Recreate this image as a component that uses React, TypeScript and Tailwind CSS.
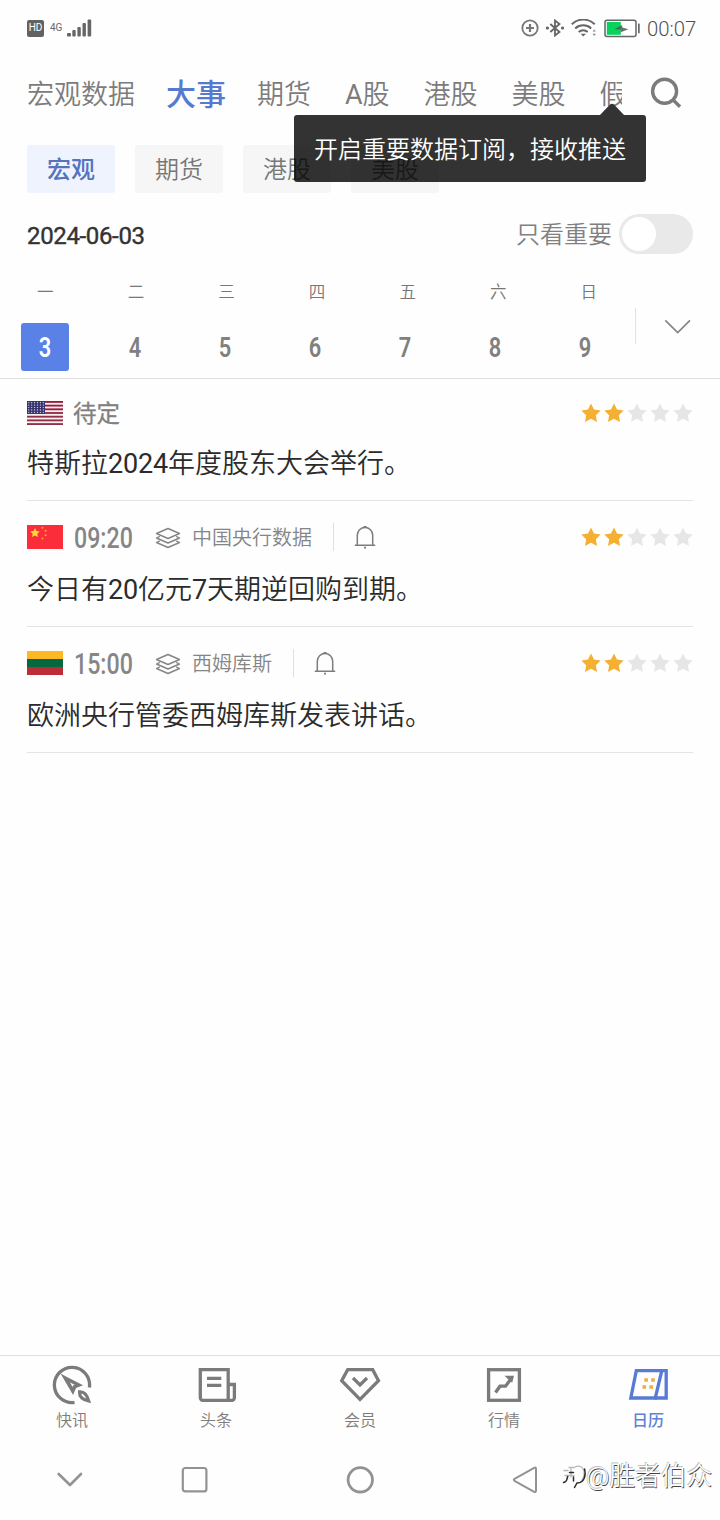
import { useState } from 'react';
import type { ReactNode } from 'react';
import clsx from 'clsx';

interface EventItem {
  id: number;
  flag: ReactNode;
  time: string;
  source?: string;
  title: string;
  stars: number;
}

const STAR = 'M10 1l2.8 5.7 6.2.9-4.5 4.4 1.1 6.2L10 15.3l-5.6 2.9 1.1-6.2L1 7.6l6.2-.9z';

function UsFlag() {
  return (
    <svg viewBox="0 0 36 24" className="h-6 w-9">
      <rect width="36" height="24" fill="#f7eef0" />
      {[0, 1, 2, 3, 4, 5, 6].map((i) => (
        <rect key={i} y={i * 3.69} width="36" height="1.85" fill={i < 3 ? '#9b1b3d' : '#8f3046'} />
      ))}
      <rect width="18" height="13" fill="#37346f" />
      {[0, 1, 2, 3, 4].map((row) =>
        [0, 1, 2, 3, 4, 5].map((col) => (
          <circle key={`${row}-${col}`} cx={1.8 + col * 2.9} cy={1.7 + row * 2.4} r="0.6" fill="#e5e5f2" />
        ))
      )}
    </svg>
  );
}

function CnFlag() {
  return (
    <svg viewBox="0 0 36 24" className="h-6 w-9">
      <rect width="36" height="24" fill="#fb2d3a" />
      <path d={STAR} fill="#ffd83b" transform="translate(2.8 2.6) scale(0.52)" />
      {[[15.5, 2.8], [18.6, 5.8], [18.6, 10.2], [15.5, 13.6]].map(([x, y]) => (
        <circle key={y} cx={x} cy={y} r="1" fill="#f9a83a" />
      ))}
    </svg>
  );
}

function LtFlag() {
  return (
    <svg viewBox="0 0 36 24" className="h-6 w-9">
      <rect width="36" height="8" fill="#fdb924" />
      <rect y="8" width="36" height="8" fill="#06683f" />
      <rect y="16" width="36" height="8" fill="#be2d37" />
    </svg>
  );
}

const tabs = ['宏观数据', '大事', '期货', 'A股', '港股', '美股', '假期'];
const chips = ['宏观', '期货', '港股', '美股'];
const week = ['一', '二', '三', '四', '五', '六', '日'];
const days = [3, 4, 5, 6, 7, 8, 9];

const events: EventItem[] = [
  { id: 1, flag: <UsFlag />, time: '待定', title: '特斯拉2024年度股东大会举行。', stars: 2 },
  { id: 2, flag: <CnFlag />, time: '09:20', source: '中国央行数据', title: '今日有20亿元7天期逆回购到期。', stars: 2 },
  { id: 3, flag: <LtFlag />, time: '15:00', source: '西姆库斯', title: '欧洲央行管委西姆库斯发表讲话。', stars: 2 },
];

// Latin letters and digits sit one weight above the Chinese text
function Mixed({ text }: { text: string }) {
  return (
    <>
      {text.split(/([A-Z0-9]+)/).map((part, i) =>
        i % 2 ? (
          <span key={i} className="font-normal tracking-[-0.2px]">
            {part}
          </span>
        ) : (
          part
        )
      )}
    </>
  );
}

function StatusBar() {
  return (
    <div className="flex h-14 items-center pr-6 pl-[27px] text-[#666]">
      <span className="flex h-[17px] w-[17px] items-center justify-center rounded-[2px] bg-[#626262] text-[10px] leading-none text-white">
        HD
      </span>
      <span className="ml-[6px] w-[13px] text-[10px] leading-none tracking-[-0.2px]">4G</span>
      <svg viewBox="0 0 25 18" className="ml-1 h-[18px] w-[25px]" fill="#666">
        <rect x="0" y="14" width="4" height="3.5" rx="1" />
        <rect x="5.3" y="11" width="3.4" height="6.5" rx="1" />
        <rect x="10.4" y="8" width="3.4" height="9.5" rx="1" />
        <rect x="15.5" y="4" width="3.4" height="13.5" rx="1" />
        <rect x="20.6" y="0.5" width="3.6" height="17" rx="1" />
      </svg>
      <div className="ml-auto flex items-center">
        <svg viewBox="0 0 18 18" className="h-[18px] w-[18px]" fill="none" stroke="#777" strokeWidth="1.8">
          <circle cx="9" cy="9" r="7.7" />
          <path d="M9 5v8M5 9h8" strokeWidth="2.2" />
        </svg>
        <svg viewBox="0 0 18 18" className="ml-[7px] h-[18px] w-[18px]" fill="none" stroke="#666" strokeWidth="1.8">
          <path d="M4.3 5l9.2 8L9 16.5v-15L13.5 5l-9.2 8" />
          <circle cx="1.5" cy="9" r="0.7" fill="#666" />
          <circle cx="16.5" cy="9" r="0.7" fill="#666" />
        </svg>
        <svg viewBox="0 0 26 18" className="ml-[7px] h-[18px] w-[26px]" fill="none" stroke="#666" strokeWidth="2">
          <path d="M.8 5.2a16.5 16.5 0 0 1 22.9 0M4.2 9.4a12 12 0 0 1 16 0M7.7 13a7 7 0 0 1 9 0" />
          <path d="M9.6 14.8h5.4L12.3 17.6z" fill="#666" stroke="none" />
          <path d="M21.5 12.6L23.2 10.5l1.7 2.1zM21.5 14.8l1.7 2.1 1.7-2.1z" fill="#888" stroke="none" />
        </svg>
        <svg viewBox="0 0 36 19" className="mt-px ml-[7px] h-[19px] w-9">
          <rect x="1" y="1.2" width="31" height="16.4" rx="2" fill="#fff" stroke="#666" strokeWidth="1.5" />
          <rect x="2.8" y="3" width="14" height="12.8" fill="#06d25c" />
          <path d="M10.5 10.2L18.2 6v2.6l6.2 1.6-7.7 3v-2.6z" fill="#4d5a51" fillOpacity="0.85" />
          <rect x="34" y="4.6" width="1.7" height="9.6" fill="#666" />
        </svg>
        <span className="ml-[7px] w-[49px] pt-[3px] font-[Roboto] text-[20.3px] leading-none font-[350] whitespace-nowrap text-[#505050]">
          00:07
        </span>
      </div>
    </div>
  );
}

function TabBar() {
  return (
    <div className="flex h-[74px] items-center">
      <div className="flex w-[622px] items-center overflow-hidden pt-[3px] pl-[27px] font-[350] text-[#7c7c7c]">
        {tabs.map((tab) => (
          <span
            key={tab}
            className={clsx(
              'mr-[34px] shrink-0 text-[27px] leading-[40px] whitespace-nowrap',
              tab === '大事' && '-ml-[3px] !mr-[31px] text-[30px] font-medium text-[#557acf]'
            )}
          >
            <Mixed text={tab} />
          </span>
        ))}
      </div>
      <svg viewBox="0 0 32 32" className="ml-7 h-8 w-8" fill="none" stroke="#7b7b7b" strokeWidth="3.4">
        <circle cx="14.6" cy="14.2" r="12" />
        <path d="M22.8 22.6l7.2 7.2" />
      </svg>
    </div>
  );
}

function Tooltip() {
  return (
    <div className="absolute top-[115px] left-[294px] flex h-[67px] w-[352px] items-center justify-center rounded-[3px] bg-black/80 text-[24px] text-white">
      <svg viewBox="0 0 24 12" className="absolute -top-3 left-[306px] h-3 w-6">
        <path d="M0 12L9.8 1.8q2.2-2.2 4.4 0L24 12z" fill="#333" />
      </svg>
      <span className="pt-[3px] leading-[36px] font-[350]">开启重要数据订阅，接收推送</span>
    </div>
  );
}

function Stars({ count }: { count: number }) {
  return (
    <div className="ml-auto flex gap-[3px]">
      {[0, 1, 2, 3, 4].map((i) => (
        <svg key={i} viewBox="0.7 0.6 18.6 18.6" className="h-5 w-5">
          <path d={STAR} fill={i < count ? '#f4b033' : '#e6e6e6'} />
        </svg>
      ))}
    </div>
  );
}

function EventRow({ item }: { item: EventItem }) {
  return (
    <div
      className={clsx(
        'mx-[27px] flex flex-col border-b border-[#e4e4e4]',
        item.source ? 'h-[126px] pt-[18px]' : 'h-[122px] pt-4'
      )}
    >
      <div className="flex h-9 items-center">
        {item.flag}
        {item.source ? (
          <span className="ml-[10px] w-[61px] pt-[2px]">
            <span className="block w-[76px] origin-left scale-x-[0.8] text-center font-[Roboto] text-[29px] leading-9 font-medium text-[#868686]">
              {item.time}
            </span>
          </span>
        ) : (
          <span className="ml-[10px] pt-[2px] text-[23.5px] leading-9 text-[#808080] [-webkit-text-stroke:0.3px_#808080]">{item.time}</span>
        )}
        {item.source && (
          <>
            <svg viewBox="0 0 26 22" className="mt-[2px] ml-[21px] h-[22px] w-[26px]" fill="none" stroke="#858585" strokeWidth="1.4" strokeLinejoin="round">
              <path d="M13 1.5l11.5 5L13 11.5 1.5 6.5z" />
              <path d="M4.8 9.3L1.5 11 13 16l11.5-5-3.3-1.7" />
              <path d="M4.8 13.8l-3.3 1.7 11.5 5 11.5-5-3.3-1.7" />
            </svg>
            <span className="ml-[11px] pt-[2px] text-[20px] leading-7 font-[350] text-[#858585]">{item.source}</span>
            <span className="ml-[21px] h-7 w-px bg-[#e0e0e0]" />
            <svg viewBox="0 0 22 24" className="ml-5 h-6 w-[22px]" fill="none" stroke="#7d7d7d" strokeWidth="1.5">
              <path d="M.8 20.3h20.4M3.3 20.3V10.2a7.7 7.7 0 0 1 15.4 0v10.1" />
              <path d="M9.5 1.8h3M10 22.6h2" strokeWidth="1.6" />
            </svg>
          </>
        )}
        <Stars count={item.stars} />
      </div>
      <p className={clsx('text-[27px] leading-10 font-[350] text-[#2b2b2b]', item.source ? 'mt-[15px]' : 'mt-[13px]')}>
        <Mixed text={item.title} />
      </p>
    </div>
  );
}

function NavIcon({ name }: { name: string }) {
  const common = { viewBox: '0 0 42 40', className: 'h-10 w-[42px]', fill: 'none', stroke: '#7b7b7b', strokeWidth: 3.3 };
  switch (name) {
    case '快讯':
      return (
        <svg {...common}>
          <path d="M23.5 37.4A17.6 17.6 0 1 1 38.4 22.5" />
          <path d="M14.2 13l13.5 7-4 1.6-1.9 4.4z" strokeWidth="3.6" />
          <path d="M28.5 26.8q6.5-.6 9.2 9.2-9.6-2.2-9.2-9.2z" strokeWidth="3.2" />
        </svg>
      );
    case '头条':
      return (
        <svg {...common}>
          <path d="M33.2 35.3V4.6H5.3v28.2a2.5 2.5 0 0 0 2.5 2.5h29.1a2.5 2.5 0 0 0 2.5-2.5V19.5h-6" />
          <path d="M12 13.3h14.3M12 20.3h14.3" />
        </svg>
      );
    case '会员':
      return (
        <svg {...common}>
          <path d="M8.7 4.7h25l5.8 11L21 34.3 2.7 15.7z" />
          <path d="M14 13l7 7 7-7" />
        </svg>
      );
    case '行情':
      return (
        <svg {...common}>
          <rect x="5.6" y="4.7" width="30.8" height="30.6" />
          <path d="M12.5 27.5l4.5-6.3h5.5l6-8" />
          <path d="M21.5 10.8h9.5l-1.8 7-3-2.6z" fill="#7b7b7b" stroke="none" />
        </svg>
      );
    default:
      return (
        <svg {...common} stroke="#587bd3">
          <path d="M9.3 5.6h25.5L28.3 33H3.8z" />
          <path d="M34.3 5.6h4.9V33H27.8" />
          <path d="M17.3 15h3.6M24.2 15h3.6M15.5 22h3.6M22.4 22H26" stroke="#eeae3d" strokeWidth="3.5" />
        </svg>
      );
  }
}

function BottomNav() {
  return (
    <div className="flex h-[85px] border-t border-[#e0e0e0]">
      {['快讯', '头条', '会员', '行情', '日历'].map((name) => (
        <div key={name} className="flex flex-1 flex-col items-center pt-[9px]">
          <NavIcon name={name} />
          <span
            className={clsx(
              'mt-[4px] text-[16px] leading-6',
              name === '日历' ? 'font-medium text-[#5f82d3]' : 'font-[350] text-[#7d7d7d]'
            )}
          >
            {name}
          </span>
        </div>
      ))}
    </div>
  );
}

function SystemNav() {
  return (
    <div className="flex h-20 items-center pl-[56px]">
      <svg viewBox="0 0 28 28" className="h-7 w-7" fill="none" stroke="#939393" strokeWidth="2.6" strokeLinecap="round" strokeLinejoin="round">
        <path d="M2.7 8L14 19 25 8" />
      </svg>
      <svg viewBox="0 0 28 28" className="ml-[97px] h-7 w-7" fill="none" stroke="#939393" strokeWidth="2.2">
        <rect x="1.8" y="2" width="23.6" height="23.4" rx="2.5" />
      </svg>
      <svg viewBox="0 0 28 28" className="ml-[137px] h-7 w-7" fill="none" stroke="#939393" strokeWidth="2.8">
        <circle cx="14.3" cy="13.8" r="12.2" />
      </svg>
      <svg viewBox="0 0 28 28" className="ml-[137px] h-7 w-7" fill="none" stroke="#939393" strokeWidth="2" strokeLinejoin="round">
        <path d="M23.2 1.8q1.8-.8 1.8 1.2v21.6q0 2-1.8 1.2L3.5 14.8q-1.3-1 0-2z" />
      </svg>
      <div className="ml-[22px] flex items-center pb-2">
        {/* speech bubble mark with an embossed edge */}
        <svg viewBox="0 0 26 30" className="h-[30px] w-[26px]" fill="none" strokeLinecap="round">
          <g stroke="#b8b8b8" strokeWidth="1.3">
            <path d="M3 9.500h4M8 6.500h5q8-4 10 4 .5 7-3.500 10.500M4 14.500h9M10 8v8" />
          </g>
          <g stroke="#2b2b2b" strokeWidth="1.5">
            <path d="M8.500 11.500h4M2.500 21.500q3-.5 3.500-3.500l.7-2.500M12.500 16v4M23.500 8q2 8-2.500 12.500-2 1.500-5 1.500l-2.500 4.500" />
          </g>
        </svg>
        <span className="w-[130px] -translate-x-px text-[25.7px] leading-9 font-[350] whitespace-nowrap text-[#fefefe] [text-shadow:0.7px_0.7px_0_#444,-0.7px_-0.7px_0_#bdbdbd]">
          @胜者伯众
        </span>
      </div>
    </div>
  );
}

function App() {
  const [chip, setChip] = useState('宏观');
  const [day, setDay] = useState(3);
  const [importantOnly, setImportantOnly] = useState(false);

  return (
    <div className="relative flex h-[1520px] w-[720px] flex-col overflow-hidden bg-[#fefefe] font-['Roboto','Noto_Sans_CJK_SC',sans-serif]">
      <StatusBar />
      <TabBar />

      {/* Category chips */}
      <div className="mt-[15px] flex gap-5 px-[27px]">
        {chips.map((c) => (
          <button
            key={c}
            onClick={() => setChip(c)}
            className={clsx(
              'h-12 w-[88px] rounded-[3px] pt-[2px] text-[24px] leading-[46px]',
              c === chip ? 'bg-[#eff3fe] font-medium text-[#5674be]' : 'bg-[#f6f6f6] font-[350] text-[#777]'
            )}
          >
            {c}
          </button>
        ))}
      </div>

      {/* Date and switch */}
      <div className="mt-[21px] flex h-10 items-center px-[27px]">
        <span className="pt-[3px] text-[24px] tracking-[-0.35px] text-[#333] [-webkit-text-stroke:0.4px_#333]">2024-06-03</span>
        <span className="ml-auto pt-[2px] text-[24px] leading-9 font-[350] text-[#808080]">只看重要</span>
        <button
          onClick={() => setImportantOnly(!importantOnly)}
          className={clsx('ml-[7px] flex h-10 w-[74px] items-center rounded-full bg-[#e9e9e9] px-[3px]', importantOnly && 'justify-end')}
        >
          <span className="h-[34px] w-[34px] rounded-full bg-white" />
        </button>
      </div>

      {/* Week strip */}
      <div className="flex h-[125px] border-b border-[#e0e0e0]">
        <div className="w-[635px]">
          <div className="flex pt-[27px]">
            {week.map((w) => (
              <span key={w} className="w-[90.6px] text-center text-[16.5px] leading-6 font-[350] text-[#777]">
                {w}
              </span>
            ))}
          </div>
          <div className="mt-[18px] flex pl-[21px]">
            {days.map((d) => (
              <button
                key={d}
                onClick={() => setDay(d)}
                className={clsx(
                  'mr-[42px] flex h-12 w-12 shrink-0 items-center justify-center rounded-[3px] pt-[2px] font-[Roboto] text-[28px] font-semibold',
                  d === day ? 'bg-[#5981e6] text-white' : 'text-[#808080]'
                )}
              >
                <span className="inline-block scale-x-[0.78]">{d}</span>
              </button>
            ))}
          </div>
        </div>
        <div className="mt-[54px] h-9 w-px bg-[#e2e2e2]" />
        <svg viewBox="0 0 28 16" className="mt-[65px] ml-7 h-4 w-7" fill="none" stroke="#858585" strokeWidth="1.7">
          <path d="M1.3 1.3L13.7 13.6 26 1.3" />
        </svg>
      </div>

      {/* Events */}
      {events.map((item) => (
        <EventRow key={item.id} item={item} />
      ))}

      <div className="mt-auto">
        <BottomNav />
        <SystemNav />
      </div>

      <Tooltip />
    </div>
  );
}

export default App;
